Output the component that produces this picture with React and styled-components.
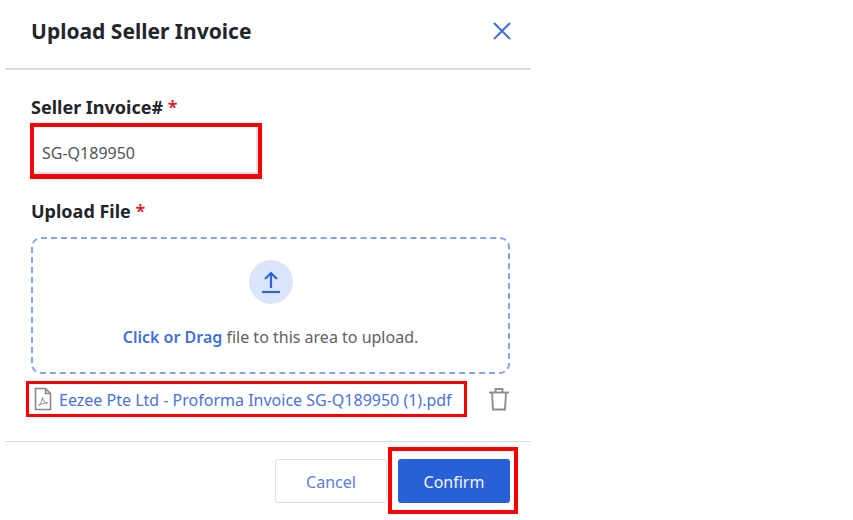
import React from 'react';
import styled, { createGlobalStyle } from 'styled-components';

const GlobalStyle = createGlobalStyle`
  html, body {
    margin: 0;
    padding: 0;
    background: #fff;
    font-family: "Noto Sans", "Open Sans", sans-serif;
  }
`;

const App = () => {
  return (
    <>
      <GlobalStyle />
      <Panel>
        <Header>
          <Title>Upload Seller Invoice</Title>
          <CloseButton aria-label="Close">
            <svg width="20" height="20" viewBox="0 0 20 20" fill="none" stroke="#3f6fd8" strokeWidth="2">
              <path d="M2 2 L18 18 M18 2 L2 18" />
            </svg>
          </CloseButton>
        </Header>

        <Body>
          <Label>Seller Invoice# <Req>*</Req></Label>
          <Highlight>
            <InvoiceInput>SG-Q189950</InvoiceInput>
          </Highlight>

          <UploadLabel>Upload File <Req>*</Req></UploadLabel>
          <DropZone>
            <UploadCircle>
              <svg width="20" height="24" viewBox="0 0 20 24" fill="none" stroke="#2f66d6" strokeWidth="2.2">
                <path d="M10 18 V3.5 M4 9 L10 3 L16 9" />
                <path d="M1 22 H19" />
              </svg>
            </UploadCircle>
            <DropText><strong>Click or Drag</strong> file to this area to upload.</DropText>
          </DropZone>

          <FileRow>
            <FileHighlight>
              <svg width="18" height="24" viewBox="0 0 18 24" fill="none" stroke="#85888c" strokeWidth="1.6">
                <path d="M1.5 1.5 H11.5 L16.5 6.5 V22.5 H1.5 Z" />
                <path d="M11.5 1.5 V6.5 H16.5" />
                <path strokeWidth="1" d="M4.5 18.5 C7 16.5 8.5 13 8.5 10.5 C9 13.5 11 15.5 13.5 16 C10.5 15.8 7 16.8 4.5 18.5 Z" />
              </svg>
              <FileName>Eezee Pte Ltd - Proforma Invoice SG-Q189950 (1).pdf</FileName>
            </FileHighlight>
            <TrashButton aria-label="Delete">
              <svg width="20" height="24" viewBox="0 0 20 24" fill="none" stroke="#8a8d91" strokeWidth="1.9">
                <path d="M0 5.5 H20" />
                <path d="M6.5 5.5 V2 H13.5 V5.5" />
                <path d="M3 5.5 L4 22.5 H16 L17 5.5" />
              </svg>
            </TrashButton>
          </FileRow>
        </Body>

        <Footer>
          <CancelButton>Cancel</CancelButton>
          <ConfirmHighlight>
            <ConfirmButton>Confirm</ConfirmButton>
          </ConfirmHighlight>
        </Footer>
      </Panel>
    </>
  );
};

export default App;


const Panel = styled.div`
  width: 526px;
  margin-left: 5px;
  color: #22262b;
`;

const Header = styled.div`
  display: flex;
  justify-content: space-between;
  align-items: center;
  height: 62px;
  padding: 0 19px 6px 26px;
  border-bottom: 2px solid #dcdcdc;
`;

const Title = styled.h1`
  margin: 0;
  font-size: 21px;
  font-weight: 700;
  color: #22262b;
`;

const CloseButton = styled.div`
  display: flex;
  width: 20px;
  height: 20px;
`;

const Body = styled.div`
  padding: 25px 21px 0 25px;
`;

const Label = styled.div`
  font-size: 18px;
  line-height: 24px;
  font-weight: 700;
  margin-left: 1px;
`;

const UploadLabel = styled(Label)`
  margin-top: 20px;
`;

const Req = styled.span`
  color: #e0182d;
  font-weight: 600;
`;

const Highlight = styled.div`
  width: 232px;
  height: 56px;
  box-sizing: border-box;
  margin-top: 4px;
  border: 4px solid #fa0000;
  border-bottom-width: 5px;
`;

const InvoiceInput = styled.div`
  height: 100%;
  box-sizing: border-box;
  padding: 6px 0 0 8px;
  display: flex;
  align-items: center;
  font-size: 16px;
  color: #4f545a;
  border-right: 2px solid #e2e2e2;
  border-bottom: 2px solid #e2e2e2;
`;

const DropZone = styled.div`
  width: 479px;
  height: 137px;
  box-sizing: border-box;
  margin: 14px 0 0 1px;
  border: 2px dashed #82a4ea;
  border-radius: 10px;
  display: flex;
  flex-direction: column;
  align-items: center;
  padding-top: 21px;
`;

const UploadCircle = styled.div`
  width: 44px;
  height: 44px;
  border-radius: 50%;
  background: #dbe5f9;
  display: flex;
  align-items: center;
  justify-content: center;
`;

const DropText = styled.div`
  margin-top: 22px;
  font-size: 16px;
  line-height: 22px;
  color: #5d6268;

  strong {
    font-weight: 600;
    color: #3f6fd8;
  }
`;

const FileRow = styled.div`
  display: flex;
  align-items: center;
  justify-content: space-between;
  margin: 7px 0 0 -4px;
  width: 483px;
`;

const FileHighlight = styled.div`
  display: flex;
  align-items: center;
  gap: 7px;
  width: 441px;
  height: 36px;
  box-sizing: border-box;
  padding-left: 5px;
  border: 3px solid #fa0000;
`;

const FileName = styled.span`
  font-size: 16px;
  padding-top: 1px;
  color: #4a72d8;
  white-space: nowrap;
`;

const TrashButton = styled.div`
  display: flex;
  width: 20px;
  height: 24px;
`;

const Footer = styled.div`
  display: flex;
  justify-content: flex-end;
  align-items: flex-start;
  margin-top: 24px;
  padding: 5px 13px 0 0;
  border-top: 1px solid #dcdcdc;
  height: 68px;
`;

const CancelButton = styled.div`
  width: 112px;
  height: 44px;
  margin-top: 12px;
  padding-top: 1px;
  box-sizing: border-box;
  border: 1px solid #dedede;
  border-radius: 3px;
  display: flex;
  align-items: center;
  justify-content: center;
  font-size: 16px;
  color: #5a80dc;
`;

const ConfirmHighlight = styled.div`
  width: 130px;
  height: 67px;
  box-sizing: border-box;
  margin-left: 1px;
  padding: 8px 0 0 6px;
  border: 4px solid #fa0000;
`;

const ConfirmButton = styled.div`
  width: 112px;
  height: 44px;
  padding-top: 1px;
  box-sizing: border-box;
  border-radius: 3px;
  background: #2a60d5;
  color: #f2f5fc;
  display: flex;
  align-items: center;
  justify-content: center;
  font-size: 16px;
`;
